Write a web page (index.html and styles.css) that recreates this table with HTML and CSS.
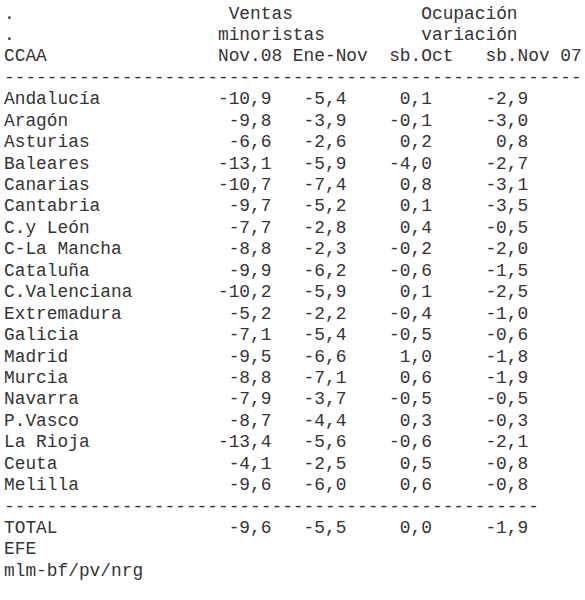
FILE: index.html
```html
<!DOCTYPE html>
<html lang="es">
<head>
  <meta charset="UTF-8">
  <meta name="viewport" content="width=device-width, initial-scale=1.0">
  <title>Ventas minoristas y ocupación</title>
  <link rel="stylesheet" href="styles.css">
</head>
<body>
  <div class="report">
    <div class="line">.                    Ventas            Ocupación</div>
    <div class="line">.                   minoristas         variación</div>
    <div class="line">CCAA                Nov.08 Ene-Nov  sb.Oct   sb.Nov 07</div>
    <div class="line">------------------------------------------------------</div>

    <div class="row"><span>Andalucía</span><span>-10,9</span><span>-5,4</span><span>0,1</span><span>-2,9</span></div>
    <div class="row"><span>Aragón</span><span>-9,8</span><span>-3,9</span><span>-0,1</span><span>-3,0</span></div>
    <div class="row"><span>Asturias</span><span>-6,6</span><span>-2,6</span><span>0,2</span><span>0,8</span></div>
    <div class="row"><span>Baleares</span><span>-13,1</span><span>-5,9</span><span>-4,0</span><span>-2,7</span></div>
    <div class="row"><span>Canarias</span><span>-10,7</span><span>-7,4</span><span>0,8</span><span>-3,1</span></div>
    <div class="row"><span>Cantabria</span><span>-9,7</span><span>-5,2</span><span>0,1</span><span>-3,5</span></div>
    <div class="row"><span>C.y León</span><span>-7,7</span><span>-2,8</span><span>0,4</span><span>-0,5</span></div>
    <div class="row"><span>C-La Mancha</span><span>-8,8</span><span>-2,3</span><span>-0,2</span><span>-2,0</span></div>
    <div class="row"><span>Cataluña</span><span>-9,9</span><span>-6,2</span><span>-0,6</span><span>-1,5</span></div>
    <div class="row"><span>C.Valenciana</span><span>-10,2</span><span>-5,9</span><span>0,1</span><span>-2,5</span></div>
    <div class="row"><span>Extremadura</span><span>-5,2</span><span>-2,2</span><span>-0,4</span><span>-1,0</span></div>
    <div class="row"><span>Galicia</span><span>-7,1</span><span>-5,4</span><span>-0,5</span><span>-0,6</span></div>
    <div class="row"><span>Madrid</span><span>-9,5</span><span>-6,6</span><span>1,0</span><span>-1,8</span></div>
    <div class="row"><span>Murcia</span><span>-8,8</span><span>-7,1</span><span>0,6</span><span>-1,9</span></div>
    <div class="row"><span>Navarra</span><span>-7,9</span><span>-3,7</span><span>-0,5</span><span>-0,5</span></div>
    <div class="row"><span>P.Vasco</span><span>-8,7</span><span>-4,4</span><span>0,3</span><span>-0,3</span></div>
    <div class="row"><span>La Rioja</span><span>-13,4</span><span>-5,6</span><span>-0,6</span><span>-2,1</span></div>
    <div class="row"><span>Ceuta</span><span>-4,1</span><span>-2,5</span><span>0,5</span><span>-0,8</span></div>
    <div class="row"><span>Melilla</span><span>-9,6</span><span>-6,0</span><span>0,6</span><span>-0,8</span></div>

    <div class="line">--------------------------------------------------</div>
    <div class="row"><span>TOTAL</span><span>-9,6</span><span>-5,5</span><span>0,0</span><span>-1,9</span></div>
    <div class="line">EFE</div>
    <div class="line">mlm-bf/pv/nrg</div>
  </div>
</body>
</html>
```

FILE: styles.css
```css
body{
  margin: 0;
  background-color: #ffffff;
}

.report{
  padding: 3.5px 0 0 4px;
  font-family: "Courier New", "Nimbus Mono PS", "Nimbus Mono L", FreeMono, "Liberation Mono", monospace;
  font-size: 17.84px;
  line-height: 21.44px;
  color: #333333;
}

.line{
  white-space: pre;
}

/* columnas: nombre, Nov.08, Ene-Nov, sb.Oct, sb.Nov 07 */
.row{
  display: grid;
  grid-template-columns: 20ch 5ch 7ch 8ch 9ch;
  white-space: pre;
}

.row span{
  text-align: right;
}

.row span:first-child{
  text-align: left;
}
```
